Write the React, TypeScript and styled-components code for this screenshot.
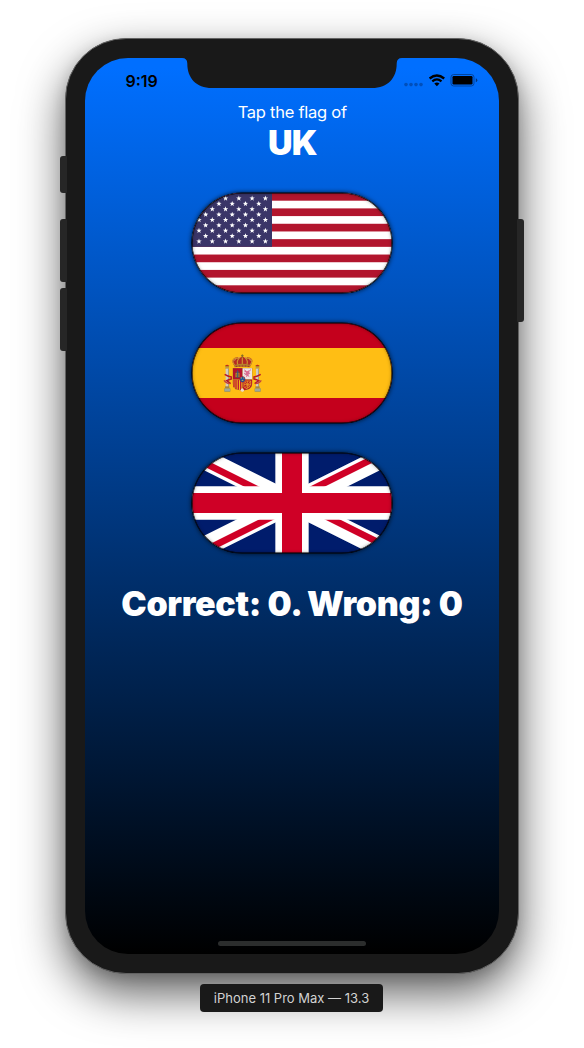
import React from "react";
import styled, { createGlobalStyle } from "styled-components";

const GlobalStyle = createGlobalStyle`
  * { box-sizing: border-box; }
  body { margin: 0; background: #fff; font-family: Inter, "Liberation Sans", sans-serif; }
`;

const Stage = styled.main`
  height: 1048px;
  width: 584px;
  padding-top: 38px;
  display: flex;
  flex-direction: column;
  align-items: center;
  gap: 10px;
  overflow: hidden;
`;

const Device = styled.div`
  position: relative;
  width: 454px;
  height: 936px;
  flex: none;
  padding: 19px;
  border: 1px solid #626262;
  border-radius: 61px;
  background: #191919;
  box-shadow: 0 19px 46px rgba(0, 0, 0, 0.64), 0 4px 14px rgba(0, 0, 0, 0.13);
`;

const SideButton = styled.span<{ $side: "left" | "right"; $top: number; $length: number }>`
  position: absolute;
  ${(p) => p.$side}: -6px;
  top: ${(p) => p.$top}px;
  width: 7px;
  height: ${(p) => p.$length}px;
  background: #262626;
  border-radius: ${(p) => (p.$side === "left" ? "3px 1px 1px 3px" : "1px 3px 3px 1px")};
`;

const Screen = styled.div`
  position: relative;
  width: 414px;
  height: 896px;
  border-radius: 43px;
  overflow: hidden;
  background: linear-gradient(#006fff 0, #006fff 10px, #000 100%);
  display: flex;
  flex-direction: column;
  align-items: center;
`;

const Notch = styled.svg`
  position: absolute;
  top: 0;
  left: 97px;
`;

const StatusBar = styled.div`
  width: 100%;
  height: 44px;
  flex: none;
  padding: 0 20px 0 40.5px;
  display: flex;
  justify-content: space-between;
`;

const Clock = styled.span`
  padding-top: 13px;
  font-size: 16px;
  line-height: 20px;
  font-weight: 600;
  color: #000;
`;

const StatusIcons = styled.svg`
  margin-top: 14px;
`;

const Prompt = styled.p`
  margin: 0;
  color: #fff;
  font-size: 16.5px;
  line-height: 21px;
  letter-spacing: -0.25px;
  text-indent: 0.5px;
`;

const Country = styled.h1`
  margin: 0;
  color: #fff;
  font-size: 34px;
  line-height: 40px;
  font-weight: 900;
  letter-spacing: -0.8px;
  text-indent: 1px;
`;

const FlagList = styled.div`
  margin-top: 30px;
  display: flex;
  flex-direction: column;
  gap: 30px;
`;

const FlagButton = styled.button`
  position: relative;
  display: block;
  width: 200px;
  height: 100px;
  padding: 0;
  border: 0;
  border-radius: 50px;
  background: none;
  box-shadow: 0 0 0 0.6px #000, 0 0 4px 1px rgba(0, 0, 0, 0.65);

  &::after {
    content: "";
    position: absolute;
    inset: 0;
    border-radius: 50px;
    box-shadow: inset 0 0 0 0.5px #000, inset 0 0 3.5px rgba(0, 0, 0, 0.5);
  }
`;

const FlagArt = styled.svg`
  display: block;
  border-radius: 50px;
`;

const Score = styled.p`
  margin: 30px 0 0;
  color: #fff;
  font-size: 34px;
  line-height: 41px;
  font-weight: 900;
  letter-spacing: -0.34px;
  white-space: nowrap;
`;

const HomeIndicator = styled.div`
  width: 148px;
  height: 5px;
  border-radius: 3px;
  margin: auto 0 8px;
  background: #2b2d2d;
`;

const Caption = styled.div`
  height: 28px;
  width: 183px;
  margin-right: 1px;
  position: relative;
  border-radius: 4px;
  background: #191919;
  color: #d2d2d2;
  font-size: 13px;
  line-height: 29px;
  text-align: center;
  white-space: nowrap;
`;

const STAR = Array.from({ length: 10 }, (_, i) => {
  const r = i % 2 ? 1.15 : 2.8;
  const a = (i * Math.PI) / 5;
  return `${(r * Math.sin(a)).toFixed(2)},${(-r * Math.cos(a)).toFixed(2)}`;
}).join(" ");

function UnitedStates() {
  const stripe = 100 / 13;
  const stars: React.ReactElement[] = [];
  for (let row = 0; row < 9; row++) {
    for (let col = row % 2; col < 11; col += 2) {
      stars.push(
        <polygon
          key={`${row}-${col}`}
          points={STAR}
          fill="#fff"
          transform={`translate(${7 + col * 6.64} ${5.38 + row * 5.38})`}
        />
      );
    }
  }
  return (
    <FlagArt width="200" height="100" viewBox="0 0 200 100">
      <rect width="200" height="100" fill="#fff" />
      {Array.from({ length: 7 }, (_, i) => (
        <rect key={i} y={i * 2 * stripe} width="200" height={stripe} fill="#b2152d" />
      ))}
      <rect width="80" height={stripe * 7} fill="#3a3568" />
      {stars}
    </FlagArt>
  );
}

function Pillar({ x }: { x: number }) {
  return (
    <g transform={`translate(${x} 0)`}>
      <path d="M2 166h13l-1 5H3z" fill="#b88b20" />
      <path d="M3 167q5-5 11 0" fill="#c4001c" />
      <rect x="3" y="172" width="11" height="4" fill="#a68a4c" />
      <rect x="4" y="176" width="9" height="55" fill="#d1cbc0" />
      <rect x="11" y="176" width="2" height="55" fill="#8d8875" />
      <rect x="2" y="229" width="13" height="5" fill="#a58542" />
      <rect x="0" y="235" width="18" height="10" fill="#76877c" />
      <path d="M1 238h16M1 242h16" stroke="#d6d6ca" strokeWidth="1.5" />
    </g>
  );
}

function Spain() {
  return (
    <FlagArt width="200" height="100" viewBox="0 0 200 100">
      <rect width="200" height="100" fill="#c4001c" />
      <rect y="25" width="200" height="50" fill="#ffbe14" />
      <g transform="translate(-12 -13) scale(.33333)">
        <Pillar x={133} />
        <Pillar x={224} />
        <path d="M134 193q9 6 20 8v6q-8 2-14 5l12 9M242 193q-9 6-20 8v6q8 2 14 5l-12 9" fill="none" stroke="#b81a28" strokeWidth="4.5" />
        <path d="M132 211q6 9 17 10M244 211q-6 9-17 10" fill="none" stroke="#c4453a" strokeWidth="3.5" />
        <path d="M164 169q-10-13-5-21 7-9 21-5l7-4 7 4q15-4 22 5 4 8-6 21z" fill="#b32c24" />
        <path d="M164 166q-9-12-3-18 6-5 18-3M210 166q9-12 3-18-6-5-18-3M174 165q-5-11 2-18M200 165q5-11-2-18M187 164v-22" fill="none" stroke="#cf952d" strokeWidth="3.5" />
        <path d="M162 152l6-4m7-5l6-2m13 0l6 2m7 5l6 4" stroke="#e8c877" strokeWidth="2.5" strokeDasharray="2 2" />
        <path d="M187 133v10M183 137h8" stroke="#776829" strokeWidth="2.5" />
        <path d="M163 165q24-7 48 0v7q-24-4-48 0z" fill="#b3822b" />
        <path d="M167 169h5m4-1h5m4 0h5m4 0h5m4 1h5" stroke="#a22432" strokeWidth="3" />
        <path d="M158 174h59v45q0 19-19 21-7 1-11 5-4-4-11-5-18-2-18-21z" fill="#a88036" />
        <path d="M159 175h28v33h-28z" fill="#b50f2b" />
        <path d="M188 175h28v33h-28z" fill="#eee4e4" />
        <path d="M159 209h28v33q-5-3-10-3-18-2-18-20z" fill="#f5b51b" />
        <path d="M162 209v23m6-23v29m7-29v30m7-30v32" stroke="#bd1930" strokeWidth="4" />
        <path d="M188 209h28v10q0 18-18 20-6 1-10 3z" fill="#b91429" />
        <path d="M166 202v-12h2v-5h2v3h4v-3h2v5h3v12z" fill="#b7812a" />
        <path d="M166 187h13M167 195h3m5 0h3M166 202h13" stroke="#575045" strokeWidth="2.5" />
        <path d="M173 181v21" stroke="#34578a" strokeWidth="3" />
        <path d="M196 181l5 3 8-4-2 7 4 3-6 4 4 8-6-4-5 4 1-7-7 1 6-5-1-5-5 1z" fill="#db6e93" />
        <path d="M192 179l6 5m14-6l-3 6m-17 6l6 2" stroke="#cc557c" strokeWidth="2" />
        <path d="M192 213h20v9q-1 11-14 14l-6-6zM192 213l18 19m2-18l-18 20M192 223h20M202 213v22" fill="none" stroke="#e79c22" strokeWidth="2.5" />
        <path d="M181 242q6-14 12 0l-6 4z" fill="#eee0c4" />
        <ellipse cx="187.500" cy="208" rx="8.500" ry="9.500" fill="#a92436" />
        <ellipse cx="187.500" cy="208" rx="7" ry="8" fill="#14519e" />
        <path d="M182 204h4m4 0h3m-8 7h5" stroke="#d3b251" strokeWidth="3" />
      </g>
    </FlagArt>
  );
}

function UnitedKingdom() {
  return (
    <FlagArt width="200" height="100" viewBox="0 0 60 30">
      <clipPath id="saltire">
        <path d="M30 15h30v15zv15H0zH0V0zV0h30z" />
      </clipPath>
      <rect width="60" height="30" fill="#001c6c" />
      <path d="M0 0l60 30M60 0L0 30" stroke="#fff" strokeWidth="6" />
      <path d="M0 0l60 30M60 0L0 30" stroke="#cf0026" strokeWidth="4" clipPath="url(#saltire)" />
      <path d="M30 0v30M0 15h60" stroke="#fff" strokeWidth="10" />
      <path d="M30 0v30M0 15h60" stroke="#cf0026" strokeWidth="6" />
    </FlagArt>
  );
}

export default function App() {
  return (
    <>
      <GlobalStyle />
      <Stage>
        <Device>
          <SideButton $side="left" $top={117} $length={37} />
          <SideButton $side="left" $top={180} $length={63} />
          <SideButton $side="left" $top={249} $length={63} />
          <SideButton $side="right" $top={180} $length={103} />
          <Screen>
            <Notch width="220" height="30" viewBox="0 0 220 30">
              <path d="M0 0Q5.300 0 5.300 5.500C5.300 20 14 30 30 30H190C206 30 214.700 20 214.700 5.500Q214.700 0 220 0Z" fill="#191919" />
            </Notch>
            <StatusBar>
              <Clock>9:19</Clock>
              <StatusIcons width="76" height="18" viewBox="0 0 76 18">
                <g fill="#003c91" opacity=".6">
                  <circle cx="3" cy="12.600" r="1.800" />
                  <circle cx="8" cy="12.600" r="1.800" />
                  <circle cx="13" cy="12.600" r="1.800" />
                  <circle cx="18" cy="12.600" r="1.800" />
                </g>
                <g fill="none" stroke="#000" strokeWidth="2.300">
                  <path d="M26.600 6.500Q33.900 .400 41.200 6.500" />
                  <path d="M29.300 9.300Q33.900 5.500 38.500 9.300" />
                </g>
                <path d="M31.300 11.500Q33.900 9.400 36.500 11.500L33.900 14.200Z" />
                <rect x="48" y="2.500" width="23" height="11.500" rx="2.700" fill="none" stroke="#00459f" />
                <rect x="49.500" y="4" width="20" height="8.500" rx="1.200" />
                <path d="M72.800 6.300q1.500.500 1.500 2t-1.500 2z" fill="#00377e" />
              </StatusIcons>
            </StatusBar>
            <Prompt>Tap the flag of</Prompt>
            <Country>UK</Country>
            <FlagList>
              <FlagButton aria-label="US"><UnitedStates /></FlagButton>
              <FlagButton aria-label="Spain"><Spain /></FlagButton>
              <FlagButton aria-label="UK"><UnitedKingdom /></FlagButton>
            </FlagList>
            <Score>Correct: 0. Wrong: 0</Score>
            <HomeIndicator />
          </Screen>
        </Device>
        <Caption>iPhone 11 Pro Max — 13.3</Caption>
      </Stage>
    </>
  );
}
